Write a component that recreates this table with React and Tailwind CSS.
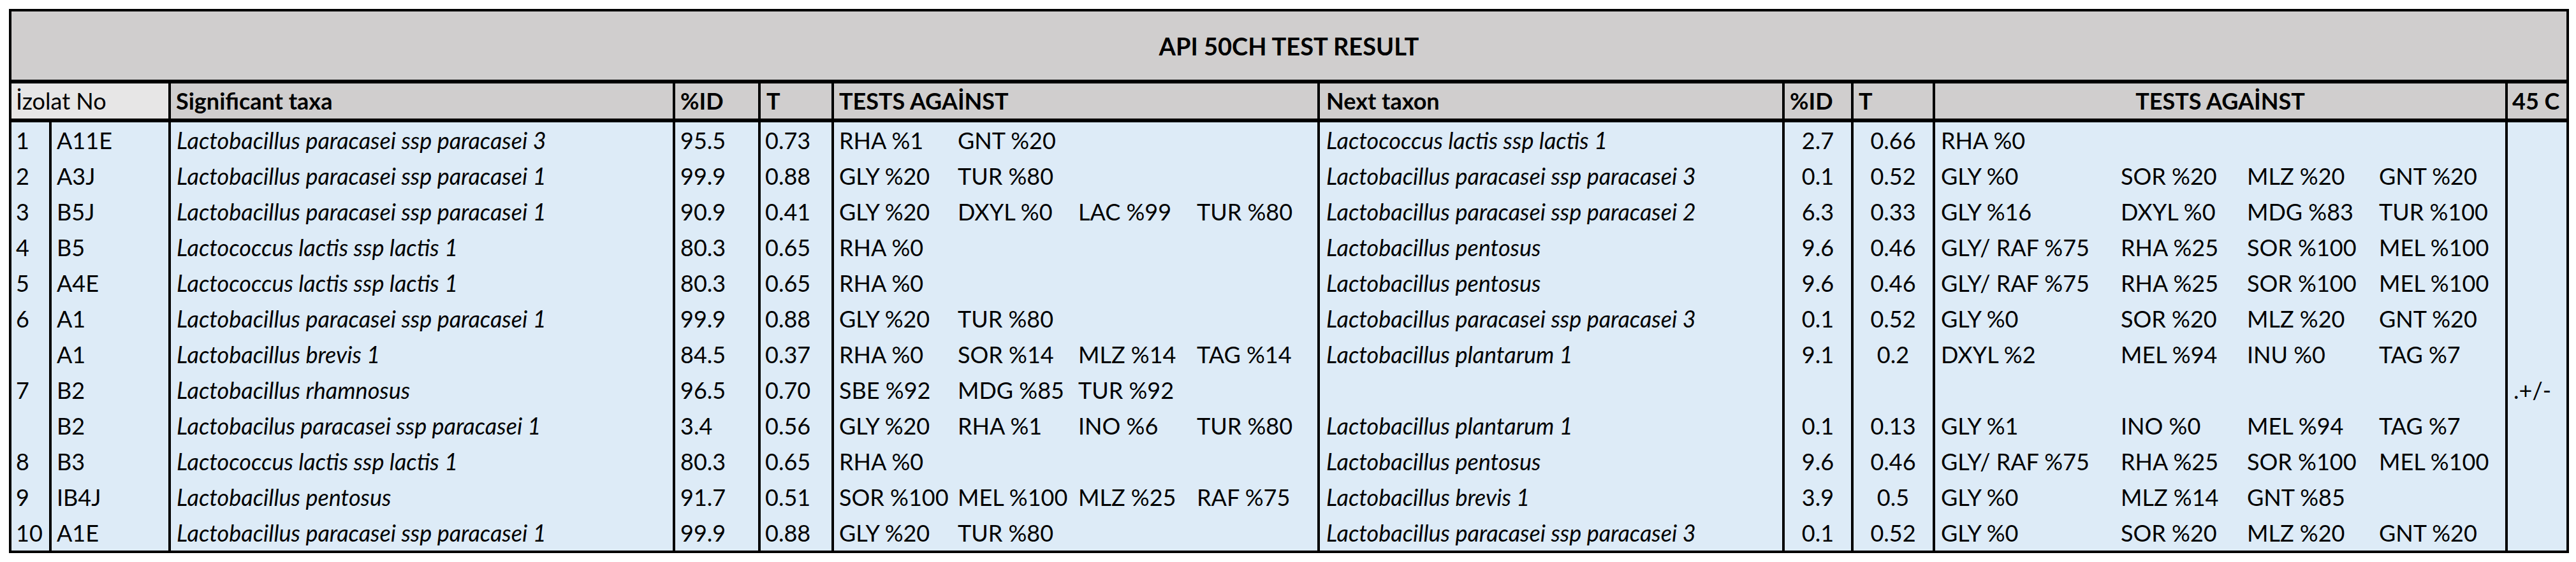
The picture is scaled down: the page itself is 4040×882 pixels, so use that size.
import React from "react";

const rows = [
  {
    no: "1",
    code: "A11E",
    taxa: "Lactobacillus paracasei ssp paracasei 3",
    id: "95.5",
    t: "0.73",
    tests: ["RHA %1", "GNT %20"],
    next: "Lactococcus lactis ssp lactis 1",
    id2: "2.7",
    t2: "0.66",
    tests2: ["RHA %0"],
  },
  {
    no: "2",
    code: "A3J",
    taxa: "Lactobacillus paracasei ssp paracasei 1",
    id: "99.9",
    t: "0.88",
    tests: ["GLY %20", "TUR %80"],
    next: "Lactobacillus paracasei ssp paracasei 3",
    id2: "0.1",
    t2: "0.52",
    tests2: ["GLY %0", "SOR %20", "MLZ %20", "GNT %20"],
  },
  {
    no: "3",
    code: "B5J",
    taxa: "Lactobacillus paracasei ssp paracasei 1",
    id: "90.9",
    t: "0.41",
    tests: ["GLY %20", "DXYL %0", "LAC %99", "TUR %80"],
    next: "Lactobacillus paracasei ssp paracasei 2",
    id2: "6.3",
    t2: "0.33",
    tests2: ["GLY %16", "DXYL %0", "MDG %83", "TUR %100"],
  },
  {
    no: "4",
    code: "B5",
    taxa: "Lactococcus lactis ssp lactis 1",
    id: "80.3",
    t: "0.65",
    tests: ["RHA %0"],
    next: "Lactobacillus pentosus",
    id2: "9.6",
    t2: "0.46",
    tests2: ["GLY/ RAF %75", "RHA %25", "SOR %100", "MEL %100"],
  },
  {
    no: "5",
    code: "A4E",
    taxa: "Lactococcus lactis ssp lactis 1",
    id: "80.3",
    t: "0.65",
    tests: ["RHA %0"],
    next: "Lactobacillus pentosus",
    id2: "9.6",
    t2: "0.46",
    tests2: ["GLY/ RAF %75", "RHA %25", "SOR %100", "MEL %100"],
  },
  {
    no: "6",
    code: "A1",
    taxa: "Lactobacillus paracasei ssp paracasei 1",
    id: "99.9",
    t: "0.88",
    tests: ["GLY %20", "TUR %80"],
    next: "Lactobacillus paracasei ssp paracasei 3",
    id2: "0.1",
    t2: "0.52",
    tests2: ["GLY %0", "SOR %20", "MLZ %20", "GNT %20"],
  },
  {
    no: "",
    code: "A1",
    taxa: "Lactobacillus brevis 1",
    id: "84.5",
    t: "0.37",
    tests: ["RHA %0", "SOR %14", "MLZ %14", "TAG %14"],
    next: "Lactobacillus plantarum 1",
    id2: "9.1",
    t2: "0.2",
    tests2: ["DXYL %2", "MEL %94", "INU %0", "TAG %7"],
  },
  {
    no: "7",
    code: "B2",
    taxa: "Lactobacillus rhamnosus",
    id: "96.5",
    t: "0.70",
    tests: ["SBE %92", "MDG %85", "TUR %92"],
    next: "",
    id2: "",
    t2: "",
    tests2: [],
    c45: ".+/-",
  },
  {
    no: "",
    code: "B2",
    taxa: "Lactobacilus paracasei ssp paracasei 1",
    id: "3.4",
    t: "0.56",
    tests: ["GLY %20", "RHA %1", "INO %6", "TUR %80"],
    next: "Lactobacillus plantarum 1",
    id2: "0.1",
    t2: "0.13",
    tests2: ["GLY %1", "INO %0", "MEL %94", "TAG %7"],
  },
  {
    no: "8",
    code: "B3",
    taxa: "Lactococcus lactis ssp lactis 1",
    id: "80.3",
    t: "0.65",
    tests: ["RHA %0"],
    next: "Lactobacillus pentosus",
    id2: "9.6",
    t2: "0.46",
    tests2: ["GLY/ RAF %75", "RHA %25", "SOR %100", "MEL %100"],
  },
  {
    no: "9",
    code: "IB4J",
    taxa: "Lactobacillus pentosus",
    id: "91.7",
    t: "0.51",
    tests: ["SOR %100", "MEL %100", "MLZ %25", "RAF %75"],
    next: "Lactobacillus brevis 1",
    id2: "3.9",
    t2: "0.5",
    tests2: ["GLY %0", "MLZ %14", "GNT %85"],
  },
  {
    no: "10",
    code: "A1E",
    taxa: "Lactobacillus paracasei ssp paracasei 1",
    id: "99.9",
    t: "0.88",
    tests: ["GLY %20", "TUR %80"],
    next: "Lactobacillus paracasei ssp paracasei 3",
    id2: "0.1",
    t2: "0.52",
    tests2: ["GLY %0", "SOR %20", "MLZ %20", "GNT %20"],
  },
];

// column widths measured off the sheet (each includes its 4px left rule)
const grid =
  "grid grid-cols-[59px_187px_791px_134px_115px_762px_729px_108px_128px_898px_96px]";
const cell = "border-l-4 border-black whitespace-nowrap overflow-hidden";

const ApiResultTable = () => {
  return (
    <div className="bg-white min-h-[882px] pt-[14px] pl-[14px] font-['Lato',sans-serif] text-black">
      <div className="w-[4015px] border-4 border-black">
        {/* title */}
        <div className="h-[113px] border-b-[6px] border-black bg-[#d0cece] flex items-center justify-center">
          <h1 className="text-[38px] font-bold leading-none">
            API 50CH TEST RESULT
          </h1>
        </div>

        {/* column headings */}
        <div
          className={`${grid} h-[61px] border-b-[6px] border-black bg-[#d0cece] text-[36px] leading-[55px] font-bold`}
        >
          <div className="col-span-2 bg-[#e7e6e6] pl-[7px] font-normal">
            İzolat No
          </div>
          <div className={`${cell} pl-[8px]`}>Significant taxa</div>
          <div className={`${cell} pl-[8px]`}>%ID</div>
          <div className={`${cell} pl-[9px]`}>T</div>
          <div className={`${cell} pl-[8px]`}>TESTS AGAİNST</div>
          <div className={`${cell} pl-[10px]`}>Next taxon</div>
          <div className={`${cell} pl-[8px]`}>%ID</div>
          <div className={`${cell} pl-[8px]`}>T</div>
          <div className={`${cell} text-center`}>TESTS AGAİNST</div>
          <div className={`${cell} pl-[7px]`}>45 C</div>
        </div>

        {/* data */}
        <div className="bg-[#ddebf7] text-[36px] leading-[56px]">
          {rows.map((r, i) => (
            <div key={i} className={`${grid} h-[56px]`}>
              <div className="pl-[7px]">{r.no}</div>
              <div className={`${cell} pl-[8px]`}>{r.code}</div>
              <div className={`${cell} pl-[9px] italic`}>{r.taxa}</div>
              <div className={`${cell} pl-[8px]`}>{r.id}</div>
              <div className={`${cell} pl-[7px]`}>{r.t}</div>
              <div
                className={`${cell} pl-[8px] grid grid-cols-[186px_189px_186px_1fr]`}
              >
                {r.tests.map((x, j) => (
                  <span key={j}>{x}</span>
                ))}
              </div>
              <div className={`${cell} pl-[10px] italic`}>{r.next}</div>
              <div className={`${cell} text-center`}>{r.id2}</div>
              <div className={`${cell} text-center`}>{r.t2}</div>
              <div
                className={`${cell} pl-[9px] grid grid-cols-[282px_198px_207px_1fr]`}
              >
                {r.tests2.map((x, j) => (
                  <span key={j}>{x}</span>
                ))}
              </div>
              <div className={`${cell} pl-[9px]`}>{r.c45}</div>
            </div>
          ))}
        </div>
      </div>
    </div>
  );
};

export default function App() {
  return <ApiResultTable />;
}
